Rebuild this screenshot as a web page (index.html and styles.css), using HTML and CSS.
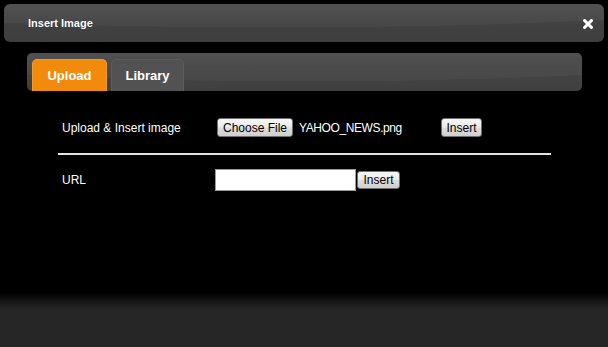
FILE: index.html
```html
<!DOCTYPE html>
<html>
<head>
<meta charset="utf-8">
<title>Insert Image</title>
<link rel="stylesheet" href="styles.css">
</head>
<body>
<div class="dialog">
  <header class="titlebar">
    <span class="title">Insert Image</span>
    <svg class="close" width="10" height="10" viewBox="0 0 10 10" aria-label="Close">
      <path d="M1.6 1.6 L8.4 8.4 M8.4 1.6 L1.6 8.4" stroke="#fff" stroke-width="3" stroke-linecap="square"/>
    </svg>
  </header>
  <nav class="tabbar">
    <div class="tab tab-upload active">Upload</div>
    <div class="tab tab-library">Library</div>
  </nav>
  <main class="content">
    <div class="row row-upload">
      <span class="label">Upload &amp; Insert image</span>
      <span class="file">
        <button class="btn btn-choose">Choose File</button>
        <span class="filename">YAHOO_NEWS.png</span>
      </span>
      <button class="btn btn-insert">Insert</button>
    </div>
    <hr class="sep">
    <div class="row row-url">
      <span class="label label-url">URL</span>
      <input class="url" type="text">
      <button class="btn btn-insert2">Insert</button>
    </div>
  </main>
  <footer class="footer"></footer>
</div>
</body>
</html>
```
FILE: styles.css
```css
html, body {
  margin: 0;
  padding: 0;
  background: #000;
}

.dialog {
  height: 347px;
  display: flex;
  flex-direction: column;
  font-family: "Liberation Sans", Arial, sans-serif;
  overflow: hidden;
}

.titlebar {
  margin: 4px 4px 0;
  height: 38px;
  box-sizing: border-box;
  border-radius: 6px;
  display: flex;
  align-items: center;
  justify-content: space-between;
  padding: 0 11px 0 24px;
  background:
    radial-gradient(ellipse 75% 62% at 45% 0%, rgba(255,255,255,0.035) 98%, rgba(255,255,255,0) 100%),
    linear-gradient(#4b4b4b, #414141 55%, #3e3e3e);
}

.title {
  color: #fff;
  font-weight: bold;
  font-size: 11px;
  text-shadow: 0 0 1px #1a2a40;
}

.close {
  display: block;
  margin-top: 1px;
}

.tabbar {
  margin: 11px 0 0 27px;
  width: 555px;
  height: 38px;
  box-sizing: border-box;
  border-radius: 5px;
  display: flex;
  align-items: flex-end;
  gap: 4px;
  padding-left: 5px;
  background:
    radial-gradient(ellipse 80% 75% at 50% 0%, rgba(255,255,255,0.03) 98%, rgba(255,255,255,0) 100%),
    linear-gradient(#4a4a4a, #3f3f3f);
}

.tab {
  height: 32px;
  box-sizing: border-box;
  border-radius: 5px 5px 0 0;
  display: flex;
  align-items: center;
  justify-content: center;
  color: #fff;
  font-size: 13px;
  font-weight: bold;
  background: #525252;
  border: 1px solid #5c5c5c;
  border-bottom: none;
}

.tab-upload {
  width: 75px;
}

.tab-library {
  width: 73px;
}

.tab.active {
  background: #f28a0c;
  border-color: #f59a2a;
}

.content {
  padding-left: 58px;
  margin-top: 27px;
}

.row {
  display: flex;
  align-items: center;
}

.row-upload {
  height: 19px;
}

.label {
  width: 159px;
  flex: none;
  box-sizing: border-box;
  padding-left: 4px;
  color: #fff;
  font-size: 12px;
}

.label-url {
  width: 157px;
}

.file {
  width: 224px;
  display: flex;
  align-items: center;
}

.btn {
  box-sizing: border-box;
  padding: 0;
  font-family: "Liberation Sans", Arial, sans-serif;
  font-size: 12px;
  color: #000;
  border: 1px solid #707070;
  border-radius: 3px;
  background: linear-gradient(#f6f6f6 0%, #ebebeb 48%, #dcdcdc 52%, #cfcfcf 100%);
}

.btn-choose {
  width: 76px;
  height: 19px;
}

.filename {
  margin-left: 6px;
  color: #fff;
  font-size: 12px;
  letter-spacing: -0.4px;
}

.btn-insert {
  width: 41px;
  height: 19px;
}

.sep {
  margin: 16px 0 14px 0;
  width: 493px;
  height: 2px;
  border: 0;
  background: #e4e4e4;
}

.row-url {
  height: 22px;
}

.url {
  width: 141px;
  height: 22px;
  box-sizing: border-box;
  margin: 0;
  border: 1px solid #9a9a9a;
  background: #fff;
}

.btn-insert2 {
  margin-left: 1px;
  width: 43px;
  height: 18px;
}

.footer {
  margin-top: auto;
  height: 54px;
  background: linear-gradient(#000 0px, #161616 8px, #262626 17px, #262626 100%);
}
```
